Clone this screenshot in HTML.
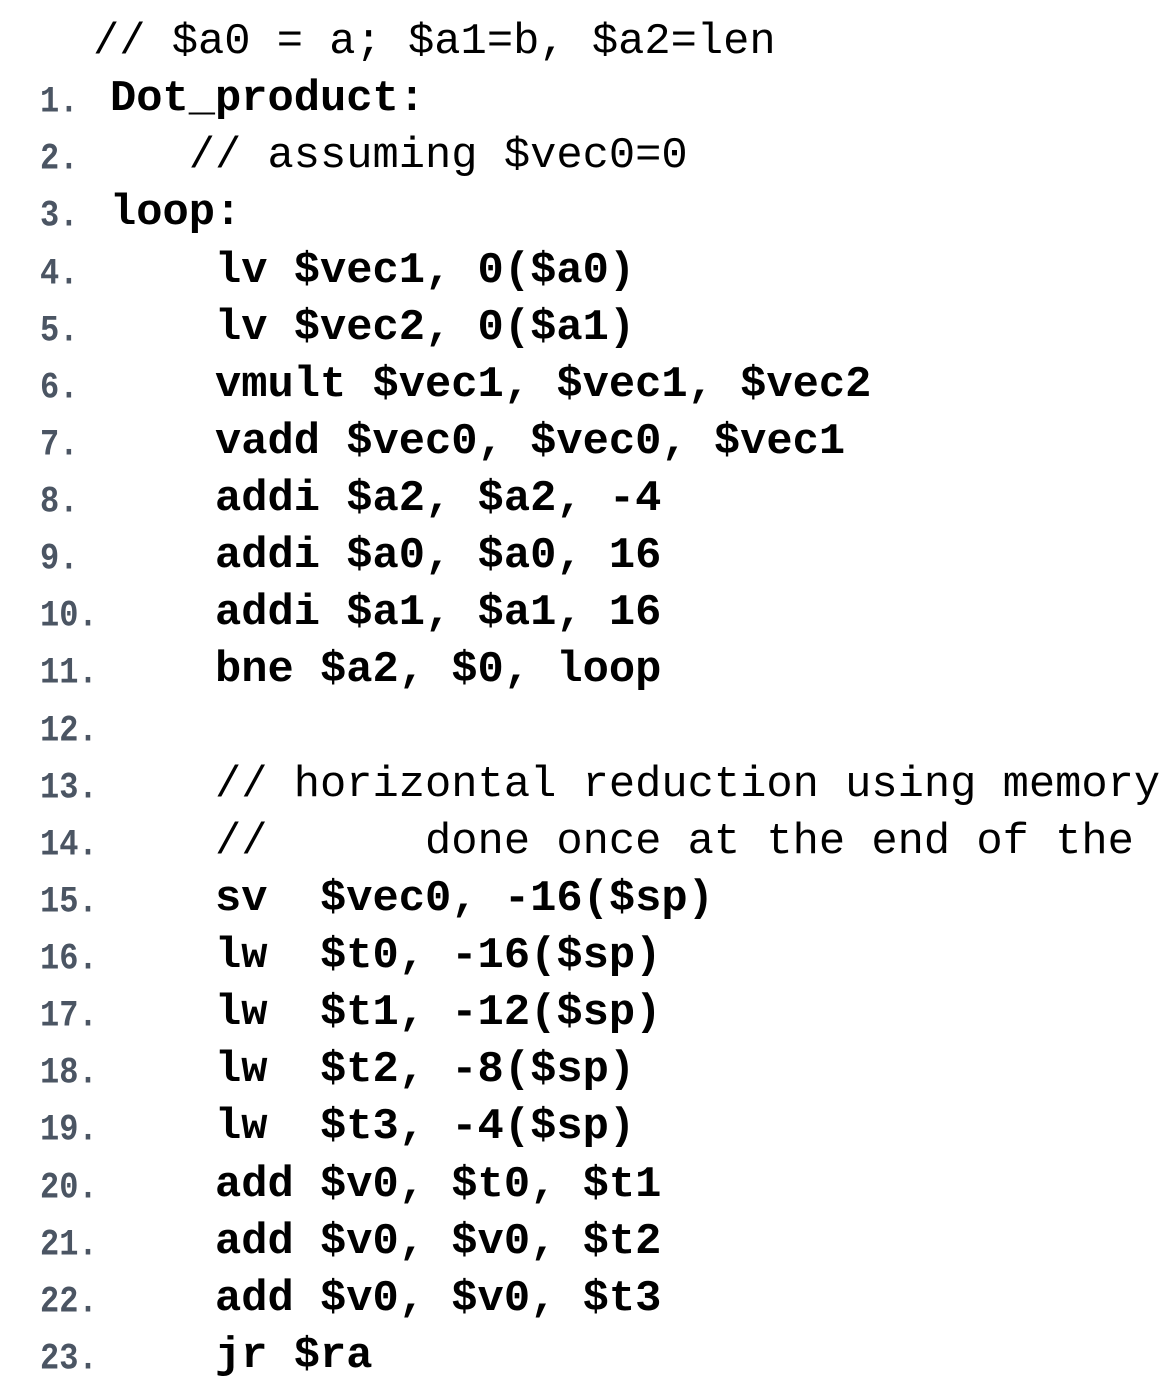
<!DOCTYPE html>
<html><head><meta charset="utf-8"><style>
html,body{margin:0;padding:0;background:#fff;width:1161px;height:1387px;overflow:hidden}
.l{position:absolute;left:0;height:57px;line-height:57px;white-space:pre;font-family:"Liberation Mono",monospace;margin-top:3px}
.n{position:absolute;left:40px;top:4px;font-size:32px;font-weight:bold;color:#4b5563;transform:scaleY(1.15);transform-origin:0 70%}
.c{position:absolute;left:110px;font-size:43.75px;font-weight:bold;color:#000;}
.m{font-weight:normal}
</style></head><body>
<div class="l" style="top:11px"><span class="c m" style="left:93px">// $a0 = a; $a1=b, $a2=len</span></div>
<div class="l" style="top:68px"><span class="n">1.</span><span class="c">Dot_product:</span></div>
<div class="l" style="top:125px"><span class="n">2.</span><span class="c m">   // assuming $vec0=0</span></div>
<div class="l" style="top:182px"><span class="n">3.</span><span class="c">loop:</span></div>
<div class="l" style="top:240px"><span class="n">4.</span><span class="c">    lv $vec1, 0($a0)</span></div>
<div class="l" style="top:297px"><span class="n">5.</span><span class="c">    lv $vec2, 0($a1)</span></div>
<div class="l" style="top:354px"><span class="n">6.</span><span class="c">    vmult $vec1, $vec1, $vec2</span></div>
<div class="l" style="top:411px"><span class="n">7.</span><span class="c">    vadd $vec0, $vec0, $vec1</span></div>
<div class="l" style="top:468px"><span class="n">8.</span><span class="c">    addi $a2, $a2, -4</span></div>
<div class="l" style="top:525px"><span class="n">9.</span><span class="c">    addi $a0, $a0, 16</span></div>
<div class="l" style="top:582px"><span class="n">10.</span><span class="c">    addi $a1, $a1, 16</span></div>
<div class="l" style="top:639px"><span class="n">11.</span><span class="c">    bne $a2, $0, loop</span></div>
<div class="l" style="top:697px"><span class="n">12.</span></div>
<div class="l" style="top:754px"><span class="n">13.</span><span class="c m">    // horizontal reduction using memory</span></div>
<div class="l" style="top:811px"><span class="n">14.</span><span class="c m">    //      done once at the end of the</span></div>
<div class="l" style="top:868px"><span class="n">15.</span><span class="c">    sv  $vec0, -16($sp)</span></div>
<div class="l" style="top:925px"><span class="n">16.</span><span class="c">    lw  $t0, -16($sp)</span></div>
<div class="l" style="top:982px"><span class="n">17.</span><span class="c">    lw  $t1, -12($sp)</span></div>
<div class="l" style="top:1039px"><span class="n">18.</span><span class="c">    lw  $t2, -8($sp)</span></div>
<div class="l" style="top:1096px"><span class="n">19.</span><span class="c">    lw  $t3, -4($sp)</span></div>
<div class="l" style="top:1154px"><span class="n">20.</span><span class="c">    add $v0, $t0, $t1</span></div>
<div class="l" style="top:1211px"><span class="n">21.</span><span class="c">    add $v0, $v0, $t2</span></div>
<div class="l" style="top:1268px"><span class="n">22.</span><span class="c">    add $v0, $v0, $t3</span></div>
<div class="l" style="top:1325px"><span class="n">23.</span><span class="c">    jr $ra</span></div>
</body></html>
